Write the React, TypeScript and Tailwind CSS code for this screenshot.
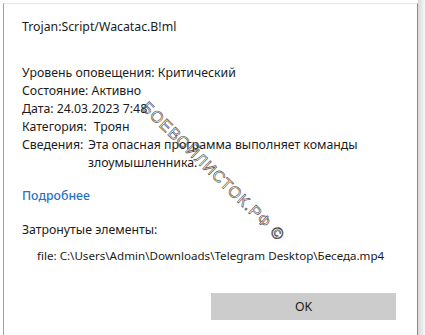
import React from "react";

export default function App() {
  return (
    <div className="w-[425px] h-[335px] bg-white flex overflow-hidden relative" style={{ fontFamily: '"Noto Sans", "Open Sans", sans-serif' }}>
      <div className="w-[3px] shrink-0 bg-white" />
      <div className="w-[415px] shrink-0 border-l border-l-[#a0a0a0] border-t border-t-[#e6e6e6] border-r border-r-[#8a8a8a] mt-[3px] flex flex-col text-[12.3px] text-[#1b1b1b] leading-[18px]">
        <div className="pl-[18px] pt-[14px]">Trojan:Script/Wacatac.B!ml</div>
        <div className="pl-[18px] mt-[28px] flex flex-col">
          <div>Уровень оповещения: Критический</div>
          <div>Состояние: Активно</div>
          <div>Дата: 24.03.2023 7:48</div>
          <div>Категория:<span className="ml-[7px]">Троян</span></div>
          <div className="flex">
            <span className="w-[66px] shrink-0">Сведения:</span>
            <span>Эта опасная программа выполняет команды<br />злоумышленника.</span>
          </div>
        </div>
        <div className="pl-[18px] mt-[15px] text-[#1f73c4] font-medium">Подробнее</div>
        <div className="pl-[18px] mt-[16px]">Затронутые элементы:</div>
        <div className="pl-[33px] mt-[8px] text-[11.6px]">file: C:\Users\Admin\Downloads\Telegram Desktop\Беседа.mp4</div>
        <div className="flex justify-end pr-[21px] mt-[28px]">
          <div className="w-[185px] h-[27px] bg-[#cccccc] flex items-center justify-center">OK</div>
        </div>
      </div>
      <div className="flex-1 bg-gradient-to-r from-[#d8d8d8] to-[#f8f8f8]" />
      <div
        className="absolute left-[144px] top-[93px] text-[16px] tracking-[1px] text-transparent [-webkit-text-stroke:0.6px_#444] origin-left rotate-[44deg] whitespace-nowrap"
        style={{ fontFamily: '"Liberation Sans", sans-serif' }}
      >
        БОЕВОЙЛИСТОК.РФ ©
      </div>
    </div>
  );
}
